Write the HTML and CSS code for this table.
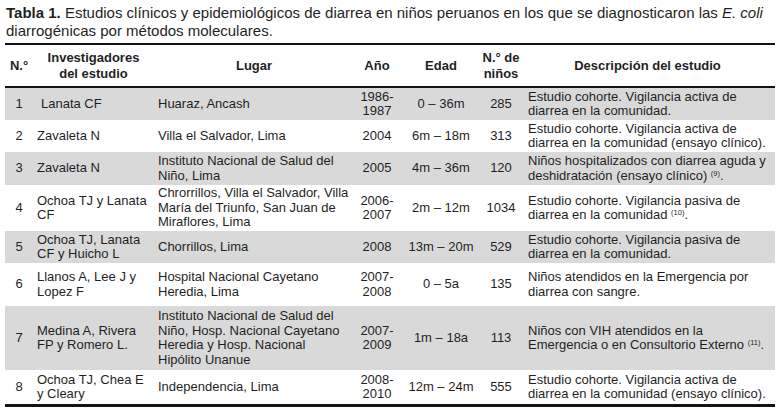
FILE: index.html
```html
<!DOCTYPE html>
<html lang="es">
<head>
<meta charset="utf-8">
<title>Tabla 1</title>
<link rel="stylesheet" href="styles.css">
</head>
<body>
<div class="page">
  <p class="caption"><b>Tabla 1.</b> Estudios clínicos y epidemiológicos de diarrea en niños peruanos en los que se diagnosticaron las <i>E. coli</i> diarrogénicas por métodos moleculares.</p>
  <table class="tbl">
    <colgroup>
      <col class="c1"><col class="c2"><col class="c3"><col class="c4"><col class="c5"><col class="c6"><col class="c7">
    </colgroup>
    <thead>
      <tr>
        <th>N.°</th>
        <th>Investigadores<br>del estudio</th>
        <th>Lugar</th>
        <th>Año</th>
        <th>Edad</th>
        <th>N.° de<br>niños</th>
        <th>Descripción del estudio</th>
      </tr>
    </thead>
    <tbody>
      <tr class="gray r1">
        <td class="num">1</td>
        <td class="indent">Lanata CF</td>
        <td>Huaraz, Ancash</td>
        <td class="ctr">1986-<br>1987</td>
        <td class="ctr">0 – 36m</td>
        <td class="ctr">285</td>
        <td class="desc">Estudio cohorte. Vigilancia activa de<br>diarrea en la comunidad.</td>
      </tr>
      <tr class="r2">
        <td class="num">2</td>
        <td>Zavaleta N</td>
        <td>Villa el Salvador, Lima</td>
        <td class="ctr">2004</td>
        <td class="ctr">6m – 18m</td>
        <td class="ctr">313</td>
        <td class="desc">Estudio cohorte. Vigilancia activa de<br>diarrea en la comunidad (ensayo clínico).</td>
      </tr>
      <tr class="gray r3">
        <td class="num">3</td>
        <td>Zavaleta N</td>
        <td>Instituto Nacional de Salud del<br>Niño, Lima</td>
        <td class="ctr">2005</td>
        <td class="ctr">4m – 36m</td>
        <td class="ctr">120</td>
        <td class="desc">Niños hospitalizados con diarrea aguda y<br>deshidratación (ensayo clínico) <sup>(9)</sup>.</td>
      </tr>
      <tr class="r4">
        <td class="num">4</td>
        <td>Ochoa TJ y Lanata<br>CF</td>
        <td>Chrorrillos, Villa el Salvador, Villa<br>María del Triunfo, San Juan de<br>Miraflores, Lima</td>
        <td class="ctr">2006-<br>2007</td>
        <td class="ctr">2m – 12m</td>
        <td class="ctr">1034</td>
        <td class="desc">Estudio cohorte. Vigilancia pasiva de<br>diarrea en la comunidad <sup>(10)</sup>.</td>
      </tr>
      <tr class="gray r5">
        <td class="num">5</td>
        <td>Ochoa TJ, Lanata<br>CF y Huicho L</td>
        <td>Chorrillos, Lima</td>
        <td class="ctr">2008</td>
        <td class="ctr">13m – 20m</td>
        <td class="ctr">529</td>
        <td class="desc">Estudio cohorte. Vigilancia pasiva de<br>diarrea en la comunidad.</td>
      </tr>
      <tr class="r6">
        <td class="num">6</td>
        <td>Llanos A, Lee J y<br>Lopez F</td>
        <td>Hospital Nacional Cayetano<br>Heredia, Lima</td>
        <td class="ctr">2007-<br>2008</td>
        <td class="ctr">0 – 5a</td>
        <td class="ctr">135</td>
        <td class="desc">Niños atendidos en la Emergencia por<br>diarrea con sangre.</td>
      </tr>
      <tr class="gray r7">
        <td class="num">7</td>
        <td>Medina A, Rivera<br>FP y Romero L.</td>
        <td>Instituto Nacional de Salud del<br>Niño, Hosp. Nacional Cayetano<br>Heredia y Hosp. Nacional<br>Hipólito Unanue</td>
        <td class="ctr">2007-<br>2009</td>
        <td class="ctr">1m – 18a</td>
        <td class="ctr">113</td>
        <td class="desc">Niños con VIH atendidos en la<br>Emergencia o en Consultorio Externo <sup>(11)</sup>.</td>
      </tr>
      <tr class="r8">
        <td class="num">8</td>
        <td>Ochoa TJ, Chea E<br>y Cleary</td>
        <td>Independencia, Lima</td>
        <td class="ctr">2008-<br>2010</td>
        <td class="ctr">12m – 24m</td>
        <td class="ctr">555</td>
        <td class="desc">Estudio cohorte. Vigilancia activa de<br>diarrea en la comunidad (ensayo clínico).</td>
      </tr>
    </tbody>
  </table>
</div>
</body>
</html>
```

FILE: styles.css
```css
html, body {
  margin: 0;
  padding: 0;
  background: #ffffff;
}

body {
  font-family: "Liberation Sans", Arial, sans-serif;
  color: #1f1f1f;
}

.page {
  padding: 4px 5px 0 5px;
  width: 770px;
}

.caption {
  margin: 0 0 3px 1px;
  font-size: 15px;
  line-height: 18px;
  color: #1f1f1f;
}

.caption b {
  font-weight: bold;
}

.tbl {
  width: 770px;
  border-collapse: collapse;
  table-layout: fixed;
  font-size: 13px;
  line-height: 14.5px;
  border-top: 2px solid #141414;
  border-bottom: 3px solid #141414;
}

.c1 { width: 28px; }
.c2 { width: 121px; }
.c3 { width: 200px; }
.c4 { width: 46px; }
.c5 { width: 82px; }
.c6 { width: 38px; }
.c7 { width: 255px; }

.tbl th {
  font-weight: bold;
  font-size: 13px;
  line-height: 16px;
  text-align: center;
  vertical-align: middle;
  padding: 3px 0;
  height: 35px;
  white-space: nowrap;
  border-bottom: 2px solid #141414;
}

.tbl td {
  vertical-align: middle;
  text-align: left;
  white-space: nowrap;
  padding: 1px 0 1px 4px;
}

.tbl .num {
  text-align: center;
  padding: 1px 0;
}

.tbl .ctr {
  text-align: center;
  padding: 1px 0;
}

.tbl .indent {
  padding-left: 8px;
}

.tbl .desc {
  padding-left: 8px;
}

.gray td {
  background: #d9d9d9;
}

.r1 td { height: 30px; }
.r2 td { height: 30px; }
.r3 td { height: 31px; }
.r4 td { height: 44px; }
.r5 td { height: 30px; }
.r6 td { height: 41px; }
.r7 td { height: 62px; }
.r8 td { height: 32px; }

sup {
  font-size: 7.5px;
  line-height: 0;
  vertical-align: 4px;
}
```
